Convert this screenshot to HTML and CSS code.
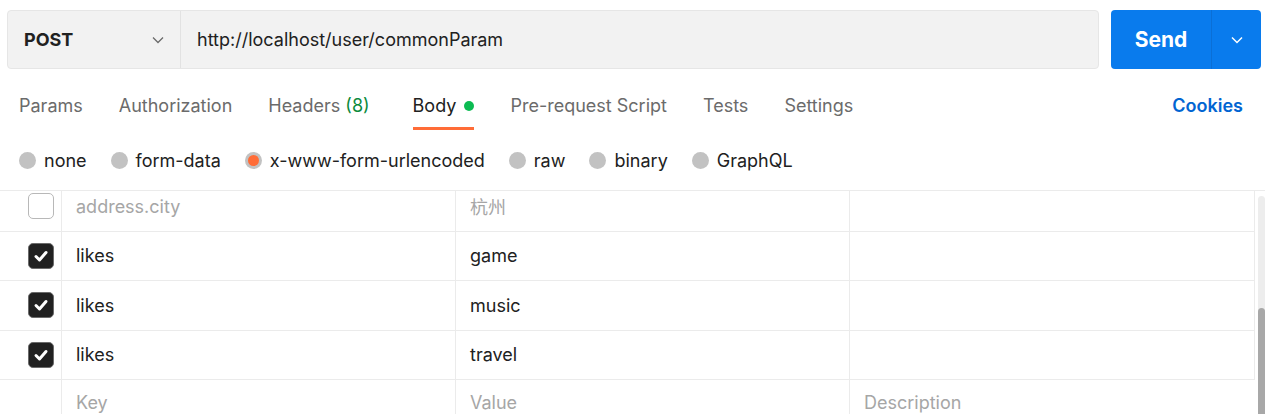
FILE: index.html
```html
<!DOCTYPE html>
<html>
<head>
<meta charset="utf-8">
<link rel="stylesheet" href="styles.css">
</head>
<body>
<div class="topbar">
  <div class="urlbar">
    <div class="method">
      <span class="method-name">POST</span>
      <svg class="chev" width="14" height="14" viewBox="0 0 14 14"><path d="M2 4.5 L7 9.5 L12 4.5" fill="none" stroke="#6b6b6b" stroke-width="1.3"/></svg>
    </div>
    <div class="url">http://localhost/user/commonParam</div>
  </div>
  <div class="send">
    <span class="send-label">Send</span>
    <span class="send-arrow"><svg width="14" height="14" viewBox="0 0 14 14"><path d="M2 4.5 L7 9.5 L12 4.5" fill="none" stroke="#ffffff" stroke-width="1.5"/></svg></span>
  </div>
</div>

<div class="tabs">
  <div class="tab">Params</div>
  <div class="tab">Authorization</div>
  <div class="tab tab-headers">Headers <span class="count">(8)</span></div>
  <div class="tab active">Body <span class="dot"></span></div>
  <div class="tab">Pre-request Script</div>
  <div class="tab">Tests</div>
  <div class="tab">Settings</div>
  <div class="spacer"></div>
  <div class="cookies">Cookies</div>
</div>

<div class="radios">
  <div class="radio"><span class="circle"></span>none</div>
  <div class="radio"><span class="circle"></span>form-data</div>
  <div class="radio"><span class="circle sel"></span>x-www-form-urlencoded</div>
  <div class="radio"><span class="circle"></span>raw</div>
  <div class="radio"><span class="circle"></span>binary</div>
  <div class="radio"><span class="circle"></span>GraphQL</div>
</div>

<div class="tablewrap">
  <div class="table">
    <div class="row">
      <div class="c0"><span class="cb"></span></div>
      <div class="cell dim">address.city</div>
      <div class="cell dim">杭州</div>
      <div class="cell"></div>
    </div>
    <div class="row">
      <div class="c0"><span class="cb on"><svg width="18" height="18" viewBox="0 0 18 18"><path d="M4 9.5 L7.5 13 L14 5.5" fill="none" stroke="#fff" stroke-width="3" stroke-linecap="round" stroke-linejoin="round"/></svg></span></div>
      <div class="cell">likes</div>
      <div class="cell">game</div>
      <div class="cell"></div>
    </div>
    <div class="row">
      <div class="c0"><span class="cb on"><svg width="18" height="18" viewBox="0 0 18 18"><path d="M4 9.5 L7.5 13 L14 5.5" fill="none" stroke="#fff" stroke-width="3" stroke-linecap="round" stroke-linejoin="round"/></svg></span></div>
      <div class="cell">likes</div>
      <div class="cell">music</div>
      <div class="cell"></div>
    </div>
    <div class="row">
      <div class="c0"><span class="cb on"><svg width="18" height="18" viewBox="0 0 18 18"><path d="M4 9.5 L7.5 13 L14 5.5" fill="none" stroke="#fff" stroke-width="3" stroke-linecap="round" stroke-linejoin="round"/></svg></span></div>
      <div class="cell">likes</div>
      <div class="cell">travel</div>
      <div class="cell"></div>
    </div>
    <div class="row last">
      <div class="c0"></div>
      <div class="cell ph">Key</div>
      <div class="cell ph">Value</div>
      <div class="cell ph">Description</div>
    </div>
  </div>
  <div class="scrollbar"><div class="thumb"></div></div>
</div>
</body>
</html>
```

FILE: styles.css
```css
* { box-sizing: border-box; }
html, body { margin: 0; padding: 0; background: #ffffff; }
body {
  font-family: Inter, "Noto Sans CJK SC", sans-serif;
  font-size: 18px;
  color: #212121;
  width: 1265px;
  height: 414px;
  overflow: hidden;
}

.topbar {
  display: flex;
  padding: 10px 4px 0 7px;
  gap: 12px;
  height: 69px;
}
.urlbar {
  flex: 1;
  display: flex;
  background: #f2f2f2;
  border: 1px solid #e6e6e6;
  border-radius: 4px;
}
.method {
  width: 173px;
  display: flex;
  align-items: center;
  justify-content: space-between;
  padding: 0 15px 0 16px;
  border-right: 1px solid #e2e2e2;
}
.method-name { font-weight: 700; font-size: 18px; color: #212121; }
.url {
  display: flex;
  align-items: center;
  padding-left: 16px;
  font-size: 18px;
  color: #212121;
}
.send {
  width: 150px;
  display: flex;
  background: #097bed;
  border-radius: 4px;
  color: #fff;
}
.send-label {
  width: 101px;
  display: flex;
  align-items: center;
  justify-content: center;
  font-weight: 700;
  font-size: 21px;
  border-right: 1px solid #0a6fd6;
}
.send-arrow {
  flex: 1;
  display: flex;
  align-items: center;
  justify-content: center;
}

.tabs {
  display: flex;
  align-items: flex-start;
  padding: 0 22px 0 19px;
  height: 61px;
}
.tab {
  padding-top: 24px;
  line-height: 26px;
  height: 61px;
  color: #6b6b6b;
  margin-right: 36px;
  white-space: nowrap;
}
.tab-headers { margin-right: 43px; }
.count { color: #0b8a3c; }
.tab.active {
  color: #212121;
  border-bottom: 3px solid #ff6c37;
  height: 61px;
}
.dot {
  display: inline-block;
  width: 10px;
  height: 10px;
  border-radius: 50%;
  background: #0cbb52;
  margin-left: 3px;
  vertical-align: 1px;
}
.spacer { flex: 1; }
.cookies {
  padding-top: 24px;
  line-height: 26px;
  color: #0265d2;
  font-weight: 600;
}

.radios {
  display: flex;
  align-items: center;
  padding: 0 0 0 19px;
  height: 60px;
}
.radio {
  display: flex;
  align-items: center;
  margin-right: 24px;
  color: #212121;
}
.circle {
  width: 17px;
  height: 17px;
  border-radius: 50%;
  background: #c2c2c2;
  margin-right: 8px;
  display: flex;
  align-items: center;
  justify-content: center;
}
.circle.sel::after {
  content: "";
  width: 11px;
  height: 11px;
  border-radius: 50%;
  background: #ff6c37;
}

.tablewrap {
  display: flex;
  height: 224px;
  overflow: hidden;
  border-top: 1px solid #ebebeb;
}
.table {
  width: 1255px;
  margin-top: -9px;
}
.row {
  display: flex;
  height: 49.5px;
  border-bottom: 1px solid #ebebeb;
}
.row.last { border-bottom: none; height: 44px; }
.c0 {
  width: 62px;
  display: flex;
  align-items: center;
  padding-left: 28px;
  border-right: 1px solid #ebebeb;
}
.cell {
  width: 394px;
  display: flex;
  align-items: center;
  padding-left: 14px;
  border-right: 1px solid #ebebeb;
  color: #212121;
}
.cell:last-child { width: 405px; }
.row.last .cell:last-child { border-right: none; }
.cell.dim { color: #a6a6a6; }
.cell.ph { color: #a6a6a6; }
.cb {
  width: 26px;
  height: 26px;
  border-radius: 5px;
  border: 1px solid #b8b8b8;
  background: #fff;
  display: flex;
  align-items: center;
  justify-content: center;
  flex: none;
}
.cb.on {
  background: #212121;
  border-color: #6b6b6b;
}

.scrollbar {
  width: 8px;
  margin-left: 3px;
  margin-top: 5px;
  background: #ededed;
  border-radius: 4px 4px 0 0;
  display: flex;
  flex-direction: column;
}
.thumb {
  margin-top: 112px;
  flex: 1;
  background: #a8a8a8;
  border-radius: 4px 4px 0 0;
}
```
